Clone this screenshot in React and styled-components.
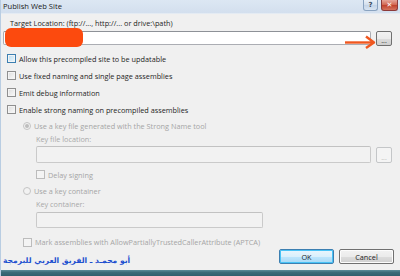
import React from "react";
import styled, { createGlobalStyle, css } from "styled-components";

const Global = createGlobalStyle`
  html, body { margin: 0; padding: 0; background: #f0f0f0; }
  body { font-family: "Open Sans", "Noto Sans", sans-serif; }
`;

const Window = styled.div`
  position: relative;
  width: 400px;
  height: 276px;
  box-sizing: border-box;
  background: #f0f0f0;
  border-left: 1px solid #b9cde2;
  display: flex;
  flex-direction: column;
  overflow: hidden;
  font-size: 7.3px;
  color: #1e1e1e;
`;

const TitleBar = styled.div`
  height: 14px;
  flex: none;
  display: flex;
  align-items: flex-start;
  justify-content: space-between;
  background: linear-gradient(#dce7f3, #d3dfee);
  border-bottom: 1px solid #e4ebf3;
  box-sizing: border-box;
`;

const Title = styled.span`
  font-size: 7.6px;
  line-height: 13px;
  padding-left: 2px;
  color: #1a1a1a;
`;

const TitleButtons = styled.div`
  display: flex;
  gap: 3px;
  padding-right: 2px;
`;

const CaptionButton = styled.div`
  height: 11px;
  box-sizing: border-box;
  border: 1px solid ${(p) => (p.$close ? "#8c3a3a" : "#8aa3c0")};
  border-top: none;
  border-radius: 0 0 3px 3px;
  display: flex;
  align-items: center;
  justify-content: center;
  font-size: 7px;
  font-weight: bold;
  font-family: "DejaVu Sans", sans-serif;
  width: ${(p) => (p.$close ? "17px" : "15px")};
  color: ${(p) => (p.$close ? "#fff" : "#3b4b5e")};
  background: ${(p) =>
    p.$close
      ? "linear-gradient(#e6a59a, #d1654f 50%, #c0402b 51%, #d5735e)"
      : "linear-gradient(#e9f0f8, #d2deec 50%, #c3d3e6 51%, #d9e5f2)"};
`;

const Body = styled.div`
  flex: 1;
  display: flex;
  flex-direction: column;
  position: relative;
`;

const Label = styled.div`
  height: 10px;
  line-height: 10px;
  margin-top: ${(p) => p.$mt || 0}px;
  padding-left: ${(p) => p.$indent || 0}px;
  color: ${(p) => (p.$disabled ? "#a9a9a9" : "#1e1e1e")};
  white-space: nowrap;
`;

const FieldRow = styled.div`
  display: flex;
  align-items: center;
  gap: 5px;
  margin-top: ${(p) => p.$mt || 0}px;
  padding-left: ${(p) => p.$indent || 0}px;
  height: ${(p) => p.$h || 14}px;
`;

const Input = styled.div`
  box-sizing: border-box;
  height: 100%;
  width: ${(p) => p.$w}px;
  border: 1px solid ${(p) => (p.$disabled ? "#cacaca" : "#abadb3")};
  border-top-color: ${(p) => (p.$disabled ? "#c2c2c2" : "#8e9197")};
  border-radius: 2px;
  background: ${(p) => (p.$disabled ? "#f2f2f2" : "#ffffff")};
`;

const BrowseButton = styled.div`
  box-sizing: border-box;
  width: 16px;
  height: ${(p) => p.$h || 15}px;
  border: 1px solid ${(p) => (p.$disabled ? "#c4c6c8" : "#707070")};
  border-radius: 2px;
  display: flex;
  align-items: flex-end;
  justify-content: center;
  line-height: 9px;
  font-size: 7px;
  color: ${(p) => (p.$disabled ? "#b5b5b5" : "#222")};
  background: ${(p) =>
    p.$disabled
      ? "#f4f4f4"
      : "linear-gradient(#f2f2f2, #ebebeb 50%, #dddddd 51%, #cfcfcf)"};
`;

const OptionRow = styled.div`
  display: flex;
  align-items: center;
  gap: ${(p) => p.$gap || 3}px;
  height: ${(p) => p.$h || 17}px;
  margin-top: ${(p) => p.$mt || 0}px;
  padding-left: ${(p) => p.$indent || 0}px;
  color: ${(p) => (p.$disabled ? "#a5a5a5" : "#1e1e1e")};
  white-space: nowrap;
`;

const CheckBox = styled.span`
  flex: none;
  box-sizing: border-box;
  width: 9px;
  height: 9px;
  border: 1px solid #8f8f8f;
  background: linear-gradient(135deg, #dcdcdc, #fbfbfb);
  box-shadow: inset 0 0 0 1px #f4f4f4;
  ${(p) =>
    p.$focus &&
    css`
      border-color: #3c7fb1;
      background: linear-gradient(135deg, #b9dcf1, #eef8fd);
    `}
  ${(p) =>
    p.$disabled &&
    css`
      border-color: #bcbcbc;
      background: #f4f4f4;
      box-shadow: none;
    `}
`;

const Radio = styled.span`
  flex: none;
  box-sizing: border-box;
  width: 8px;
  height: 8px;
  border-radius: 50%;
  border: 1px solid #c4c4c4;
  background: #f2f2f2;
  display: flex;
  align-items: center;
  justify-content: center;
  &::after {
    content: "";
    display: ${(p) => (p.$checked ? "block" : "none")};
    width: 4px;
    height: 4px;
    border-radius: 50%;
    background: #bdbdbd;
  }
`;

const Footer = styled.div`
  height: 15px;
  margin-top: -1px;
  display: flex;
  align-items: flex-start;
  justify-content: space-between;
  padding: 0 6px 0 2px;
`;

const Signature = styled.div`
  margin-top: 7px;
  font-family: "DejaVu Sans", sans-serif;
  font-weight: bold;
  font-size: 7.6px;
  line-height: 9px;
  color: #1d4fcf;
  white-space: nowrap;
`;

const Buttons = styled.div`
  display: flex;
  gap: 5px;
`;

const DialogButton = styled.div`
  box-sizing: border-box;
  width: 55px;
  height: 15px;
  border-radius: 2px;
  display: flex;
  align-items: center;
  justify-content: center;
  font-size: 7.3px;
  color: #1e1e1e;
  border: 1px solid ${(p) => (p.$default ? "#3c7fb1" : "#707070")};
  background: ${(p) =>
    p.$default
      ? "linear-gradient(#eaf6fd, #d9f0fc 50%, #bee6fd 51%, #a7d9f5)"
      : "linear-gradient(#f2f2f2, #ebebeb 50%, #dddddd 51%, #cfcfcf)"};
  box-shadow: ${(p) => (p.$default ? "inset 0 0 0 1px #48c3f6" : "inset 0 0 0 1px #fcfcfc")};
`;

const BottomStrip = styled.div`
  height: 6px;
  margin-top: 6px;
  flex: none;
  background: linear-gradient(#5b8d99, #3b6b78 40%, #2f5f6c);
`;

const Redaction = styled.div`
  position: absolute;
  left: 4px;
  top: 14px;
  width: 78px;
  height: 19px;
  border-radius: 6px;
  background: #fc4a0e;
`;

const Arrow = styled.svg`
  position: absolute;
  left: 343px;
  top: 21px;
`;

export default function App() {
  return (
    <>
      <Global />
      <Window>
        <TitleBar>
          <Title>Publish Web Site</Title>
          <TitleButtons>
            <CaptionButton>?</CaptionButton>
            <CaptionButton $close>✕</CaptionButton>
          </TitleButtons>
        </TitleBar>
        <Body>
          <Label $mt={4} $indent={9}>
            Target Location: (ftp://..., http://... or drive:\path)
          </Label>
          <FieldRow $mt={3} $indent={2} $h={14}>
            <Input $w={368} />
            <BrowseButton>...</BrowseButton>
          </FieldRow>
          <OptionRow $mt={5} $indent={6}>
            <CheckBox $focus />
            Allow this precompiled site to be updatable
          </OptionRow>
          <OptionRow $indent={6}>
            <CheckBox />
            Use fixed naming and single page assemblies
          </OptionRow>
          <OptionRow $indent={6}>
            <CheckBox />
            Emit debug information
          </OptionRow>
          <OptionRow $indent={6}>
            <CheckBox />
            Enable strong naming on precompiled assemblies
          </OptionRow>
          <OptionRow $indent={22} $h={16} $disabled>
            <Radio $checked />
            Use a key file generated with the Strong Name tool
          </OptionRow>
          <Label $indent={35} $disabled>
            Key file location:
          </Label>
          <FieldRow $mt={2} $indent={35} $h={17}>
            <Input $w={335} $disabled />
            <BrowseButton $disabled $h={16}>
              ...
            </BrowseButton>
          </FieldRow>
          <OptionRow $mt={3} $indent={35} $disabled>
            <CheckBox $disabled />
            Delay signing
          </OptionRow>
          <OptionRow $indent={22} $h={16} $disabled>
            <Radio />
            Use a key container
          </OptionRow>
          <Label $indent={35} $disabled>
            Key container:
          </Label>
          <FieldRow $mt={3} $indent={35} $h={16}>
            <Input $w={227} $disabled />
          </FieldRow>
          <OptionRow $mt={6} $indent={22} $h={16} $disabled>
            <CheckBox $disabled />
            Mark assemblies with AllowPartiallyTrustedCallerAttribute (APTCA)
          </OptionRow>
          <Footer>
            <Signature dir="rtl">أبو محمـد ـ الفريق العربي للبرمجة</Signature>
            <Buttons>
              <DialogButton $default>OK</DialogButton>
              <DialogButton>Cancel</DialogButton>
            </Buttons>
          </Footer>
          <Redaction />
          <Arrow width="32" height="14" viewBox="0 0 32 14">
            <path d="M1 7.5 H29" stroke="#f0571f" strokeWidth="2.4" fill="none" />
            <path d="M22 1.5 L30 7.5 L22 13" stroke="#f0571f" strokeWidth="2.4" fill="none" strokeLinejoin="round" />
          </Arrow>
        </Body>
        <BottomStrip />
      </Window>
    </>
  );
}
